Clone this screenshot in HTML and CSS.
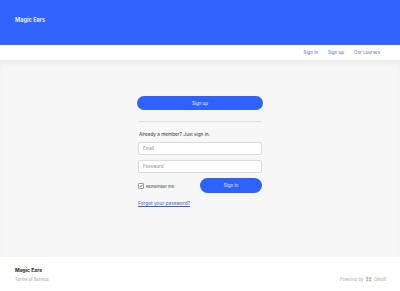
FILE: index.html
```html
<!DOCTYPE html>
<html>
<head>
<meta charset="utf-8">
<link rel="stylesheet" href="styles.css">
</head>
<body>
<header class="top">
  <div class="brand">Magic Ears</div>
</header>
<nav class="nav">
  <a href="#">Sign in</a>
  <a href="#">Sign up</a>
  <a href="#">Our courses</a>
</nav>
<main class="main">
  <div class="panel">
    <button class="btn btn-wide">Sign up</button>
    <div class="divider"></div>
    <p class="lead">Already a member? Just sign in.</p>
    <input class="field" type="text" placeholder="Email">
    <input class="field" type="password" placeholder="Password">
    <div class="row">
      <label class="remember"><span class="check"><svg viewBox="0 0 6 6" width="6" height="6"><path d="M1.1 3.2 L2.4 4.5 L4.9 1.3" fill="none" stroke="#222" stroke-width="0.9"/></svg></span>Remember me</label>
      <button class="btn btn-sign">Sign in</button>
    </div>
    <a class="forgot" href="#">Forgot your password?</a>
  </div>
</main>
<footer class="foot">
  <div class="foot-left">
    <div class="foot-brand">Magic Ears</div>
    <div class="terms">Terms of Service</div>
  </div>
  <div class="powered">Powered by
    <svg class="logo" viewBox="0 0 10 8" width="6" height="5"><rect x="0" y="0" width="4" height="3" rx="1" fill="#bbb"/><rect x="5" y="0" width="4" height="3" rx="1" fill="#bbb"/><rect x="0" y="4" width="4" height="3" rx="1" fill="#bbb"/><rect x="5" y="4" width="4" height="3" rx="1" fill="#bbb"/></svg>
    <span>Dittofi</span></div>
</footer>
</body>
</html>
```
FILE: styles.css
```css
* { box-sizing: border-box; }
html, body { margin: 0; padding: 0; }
body {
  width: 400px;
  height: 291px;
  font-family: Inter, "Open Sans", sans-serif;
  background: #fff;
  overflow: hidden;
}
.top {
  height: 45px;
  background: #3163fd;
  padding: 17px 15px 0;
}
.brand {
  color: #e3e9ff;
  font-size: 5.6px;
  font-weight: 700;
  line-height: 6px;
}
.nav {
  height: 15px;
  background: #fff;
  display: flex;
  justify-content: flex-end;
  align-items: center;
  gap: 10px;
  padding-right: 20px;
}
.nav a {
  color: #3a62d8;
  font-size: 4.2px;
  text-decoration: none;
  letter-spacing: 0.15px;
}
.main {
  height: 197px;
  background: #f7f7f7;
  box-shadow: inset 0 6px 6px -3px rgba(0,0,0,0.05);
  padding-top: 36px;
  display: flex;
  justify-content: center;
}
.panel {
  width: 126px;
  display: flex;
  flex-direction: column;
  align-items: stretch;
}
.btn {
  border: none;
  background: #2f62fb;
  color: #e8eeff;
  font-family: inherit;
  font-size: 4.5px;
  padding: 0;
  cursor: pointer;
}
.btn-wide {
  height: 14px;
  border-radius: 7px;
}
.divider {
  height: 1px;
  background: #e0e0e0;
  margin: 11px 1px 0;
}
.lead {
  margin: 9px 0 0 2px;
  font-size: 4.7px;
  line-height: 6px;
  color: #333;
}
.field {
  width: 124px;
  height: 13px;
  margin: 5px 0 0 1px;
  border: 1px solid #dcdcdc;
  border-radius: 2px;
  background: #fff;
  font-family: inherit;
  font-size: 4.4px;
  padding: 0 4px;
  color: #333;
  outline: none;
}
.field::placeholder { color: #888; }
.row {
  display: flex;
  justify-content: space-between;
  align-items: center;
  margin-top: 5px;
  padding-left: 1px;
}
.remember {
  display: flex;
  align-items: center;
  gap: 2px;
  font-size: 4.1px;
  color: #333;
  margin-top: 1px;
}
.check {
  width: 6px;
  height: 6px;
  border: 0.5px solid #999;
  border-radius: 1px;
  background: #fff;
  display: flex;
  align-items: center;
  justify-content: center;
}
.check svg { display: block; }
.btn-sign {
  width: 62px;
  height: 15px;
  border-radius: 7.5px;
  margin-right: 1px;
}
.forgot {
  margin: 7px 0 0 1px;
  font-size: 4.8px;
  color: #3a62d8;
  text-decoration: underline;
}
.foot {
  height: 34px;
  background: #fff;
  display: flex;
  justify-content: space-between;
  align-items: flex-start;
  padding: 10px 14px 0 15px;
}
.foot-brand {
  font-size: 5px;
  font-weight: 700;
  color: #222;
  line-height: 6px;
}
.terms {
  margin-top: 4px;
  font-size: 4.2px;
  color: #999;
  line-height: 5px;
}
.powered {
  margin-top: 10px;
  display: flex;
  align-items: center;
  gap: 2px;
  font-size: 4.2px;
  color: #aaa;
  line-height: 5px;
}
.powered span { color: #999; }
.logo { display: block; margin-left: 1px; }
```
